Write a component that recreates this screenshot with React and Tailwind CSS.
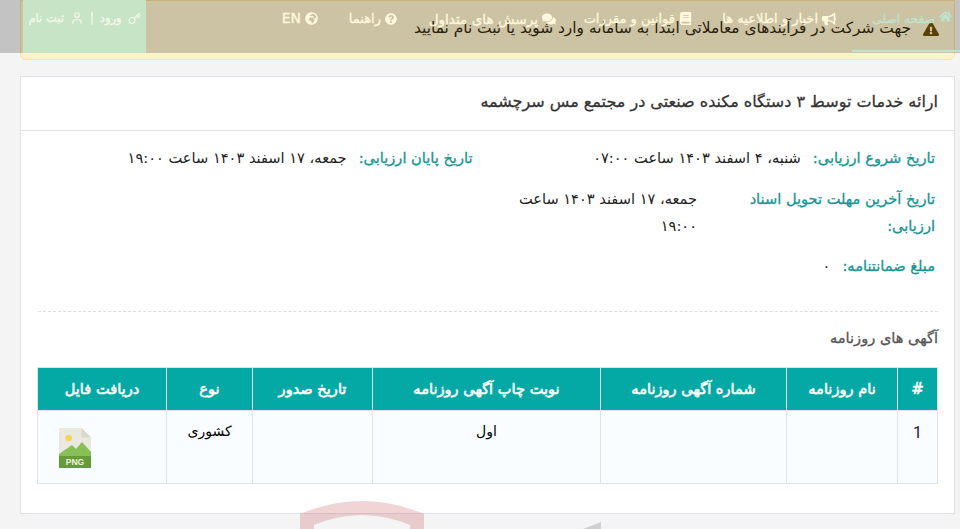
import React from "react";
import { FaHome, FaBullhorn, FaBook, FaComments, FaQuestionCircle, FaGlobeAfrica, FaExclamationTriangle } from "react-icons/fa";
import { Key, User } from "lucide-react";

function NavItem({ icon, children, className = "" }) {
  return (
    <div className={`flex shrink-0 items-center gap-[4px] whitespace-nowrap ${className}`}>
      {icon}
      <span>{children}</span>
    </div>
  );
}

function PngIcon() {
  return (
    <svg width="32" height="40" viewBox="0 0 32 40">
      <path d="M0 0H22.5L32 9.5V40H0Z" fill="#e9e9e0" />
      <path d="M22.5 0L32 9.5H22.5Z" fill="#d9d7ca" />
      <circle cx="9.6" cy="10" r="3.3" fill="#f3d55b" />
      <path d="M0 28V26L13 17L17 21L23 14L32 24V28Z" fill="#88c057" />
      <rect y="28" width="32" height="12" fill="#659c35" />
      <text x="16" y="37" textAnchor="middle" fontSize="8.5" fontWeight="700" fill="#eef4e0" fontFamily="Liberation Sans, sans-serif">PNG</text>
    </svg>
  );
}

const medium = "[-webkit-text-stroke:0.3px]";

function Field({ label, value, className = "" }) {
  return (
    <div className={`flex gap-[12px] ${className}`}>
      <span className={`text-[14.6px] text-[#159593] ${medium}`}>{label}</span>
      <span className="text-[14.6px] text-[#222]">{value}</span>
    </div>
  );
}

export default function App() {
  const heads = [
    ["#", "w-[40px] text-[15px]"],
    ["نام روزنامه", "w-[111px] text-[14.6px]"],
    ["شماره آگهی روزنامه", "w-[186px] text-[14.6px]"],
    ["نوبت چاپ آگهی روزنامه", "w-[228px] text-[14.6px]"],
    ["تاریخ صدور", "w-[120px] text-[14.6px]"],
    ["نوع", "w-[86px] text-[14.6px]"],
    ["دریافت فایل", "w-[129px] text-[14.6px]"],
  ];
  const cells = ["1", "", "", "اول", "", "کشوری"];
  return (
    <div dir="rtl" className="relative h-[529px] w-[960px] overflow-hidden bg-[#f4f4f4] font-['DejaVu_Sans',sans-serif] text-[14px]">
      {/* translucent nav lying over the page */}
      <div className={`absolute left-0 top-0 z-20 flex h-[53px] w-[960px] justify-between bg-[#00000033] pl-[23px] text-[13px] text-[#fff8dc] ${medium}`}>
        <div className="flex items-start">
          <NavItem icon={<FaHome size={13} />} className="h-[52px] w-[108px] items-start border-b-[2px] border-[#bfe3cf] pr-[8px] pt-[10px] text-[12.2px] text-[#bfe3cf]">صفحه اصلی</NavItem>
          <NavItem icon={<FaBullhorn size={14} />} className="mr-[16px] mt-[9px] w-[144px]">اخبار و اطلاعیه ها</NavItem>
          <NavItem icon={<FaBook size={13} />} className="mt-[9px] w-[136px]">قوانین و مقررات</NavItem>
          <NavItem icon={<FaComments size={14} />} className="mt-[9px] w-[159px] text-[13.6px]">پرسش های متداول</NavItem>
          <NavItem icon={<FaQuestionCircle size={12} />} className="mt-[9px] w-[79px]">راهنما</NavItem>
          <NavItem icon={<FaGlobeAfrica size={13} />} className="mt-[8px] text-[14px]">EN</NavItem>
        </div>
        <div className="flex h-[53px] w-[123px] items-start justify-center gap-[6px] bg-[#c7e4c6] pt-[10px] text-[11.5px] text-[#f3f9ea]">
          <Key size={13} className="mt-[2px]" /><span>ورود</span><span>|</span><User size={14} className="mt-[1px]" /><span>ثبت نام</span>
        </div>
      </div>

      <div className="pl-[20px] pr-[5px]">
        {/* alert */}
        <div className="flex h-[60px] items-center gap-[12px] rounded-b-[6px] border border-[#fae29a] bg-[#fff3cd] pb-[3px] pr-[15px] text-[15.4px] text-[#33290a]">
          <FaExclamationTriangle size={16} className="text-[#6e5200]" />
          <span>جهت شرکت در فرآیندهای معاملاتی ابتدا به سامانه وارد شوید یا ثبت نام نمایید</span>
        </div>

        {/* card */}
        <div className="mt-[16px] h-[438px] border border-[#dfe3e8] bg-white">
          <div className={`flex h-[54px] items-center border-b border-[#dfe3e8] pb-[3px] pr-[16px] text-[16px] text-[#333] ${medium}`}>
            ارائه خدمات توسط ۳ دستگاه مکنده صنعتی در مجتمع مس سرچشمه
          </div>
          <div className="pl-[17px] pr-[16px]">
            <div className="grid grid-cols-2 gap-x-[28px] pr-[3px] pt-[13px] leading-[27px]">
              <Field label="تاریخ شروع ارزیابی:" value="شنبه، ۴ اسفند ۱۴۰۳ ساعت ۰۷:۰۰" />
              <Field label="تاریخ پایان ارزیابی:" value="جمعه، ۱۷ اسفند ۱۴۰۳ ساعت ۱۹:۰۰" />
            </div>
            <div className="mt-[14px] flex gap-[8px] pr-[3px] leading-[27px]">
              <span className={`w-[230px] text-[14.6px] text-[#159593] ${medium}`}>تاریخ آخرین مهلت تحویل اسناد ارزیابی:</span>
              <span className="w-[182px] text-[14.6px] text-[#222]">جمعه، ۱۷ اسفند ۱۴۰۳ ساعت ۱۹:۰۰</span>
            </div>
            <Field className="mt-[13px] pr-[3px] leading-[27px]" label="مبلغ ضمانتنامه:" value="۰" />
            <div className="mt-[32px] border-t border-dashed border-[#dddddd]" />
            <div className={`mt-[15px] text-[14.6px] text-[#555] ${medium}`}>آگهی های روزنامه</div>
            <table className="mt-[18px] w-[900px] table-fixed border-collapse">
              <thead>
                <tr className="h-[43px] bg-[#04a9a5] text-white">
                  {heads.map(([h, w]) => (
                    <th key={h} className={`${w} border border-[#dfe3e8] font-normal [-webkit-text-stroke:0.6px]`}>{h}</th>
                  ))}
                </tr>
              </thead>
              <tbody>
                <tr className="h-[73px] bg-[#f9fdff] text-[14px] text-black">
                  {cells.map((c, i) => (
                    <td key={i} className={`border border-[#dfe3e8] pt-[10px] text-center align-top ${i === 0 ? "font-['Roboto',sans-serif] text-[16px] text-[#1a1a3a]" : ""}`}>{c}</td>
                  ))}
                  <td className="border border-[#dfe3e8] pr-[75px] pt-[17px] align-top"><PngIcon /></td>
                </tr>
              </tbody>
            </table>
          </div>
        </div>
      </div>

      {/* watermark lying across the bottom edge of the card */}
      <svg className="absolute left-0 top-[480px] z-10" width="960" height="49" viewBox="0 0 960 49">
        <path d="M300 34 Q362 8 424 34 V49 H410 V45 Q362 25 314 45 V49 H300Z" fill="#b42832" fillOpacity="0.2" />
        <path d="M583 49 L601 42 V49Z" fill="#cfcfcf" />
      </svg>
    </div>
  );
}
